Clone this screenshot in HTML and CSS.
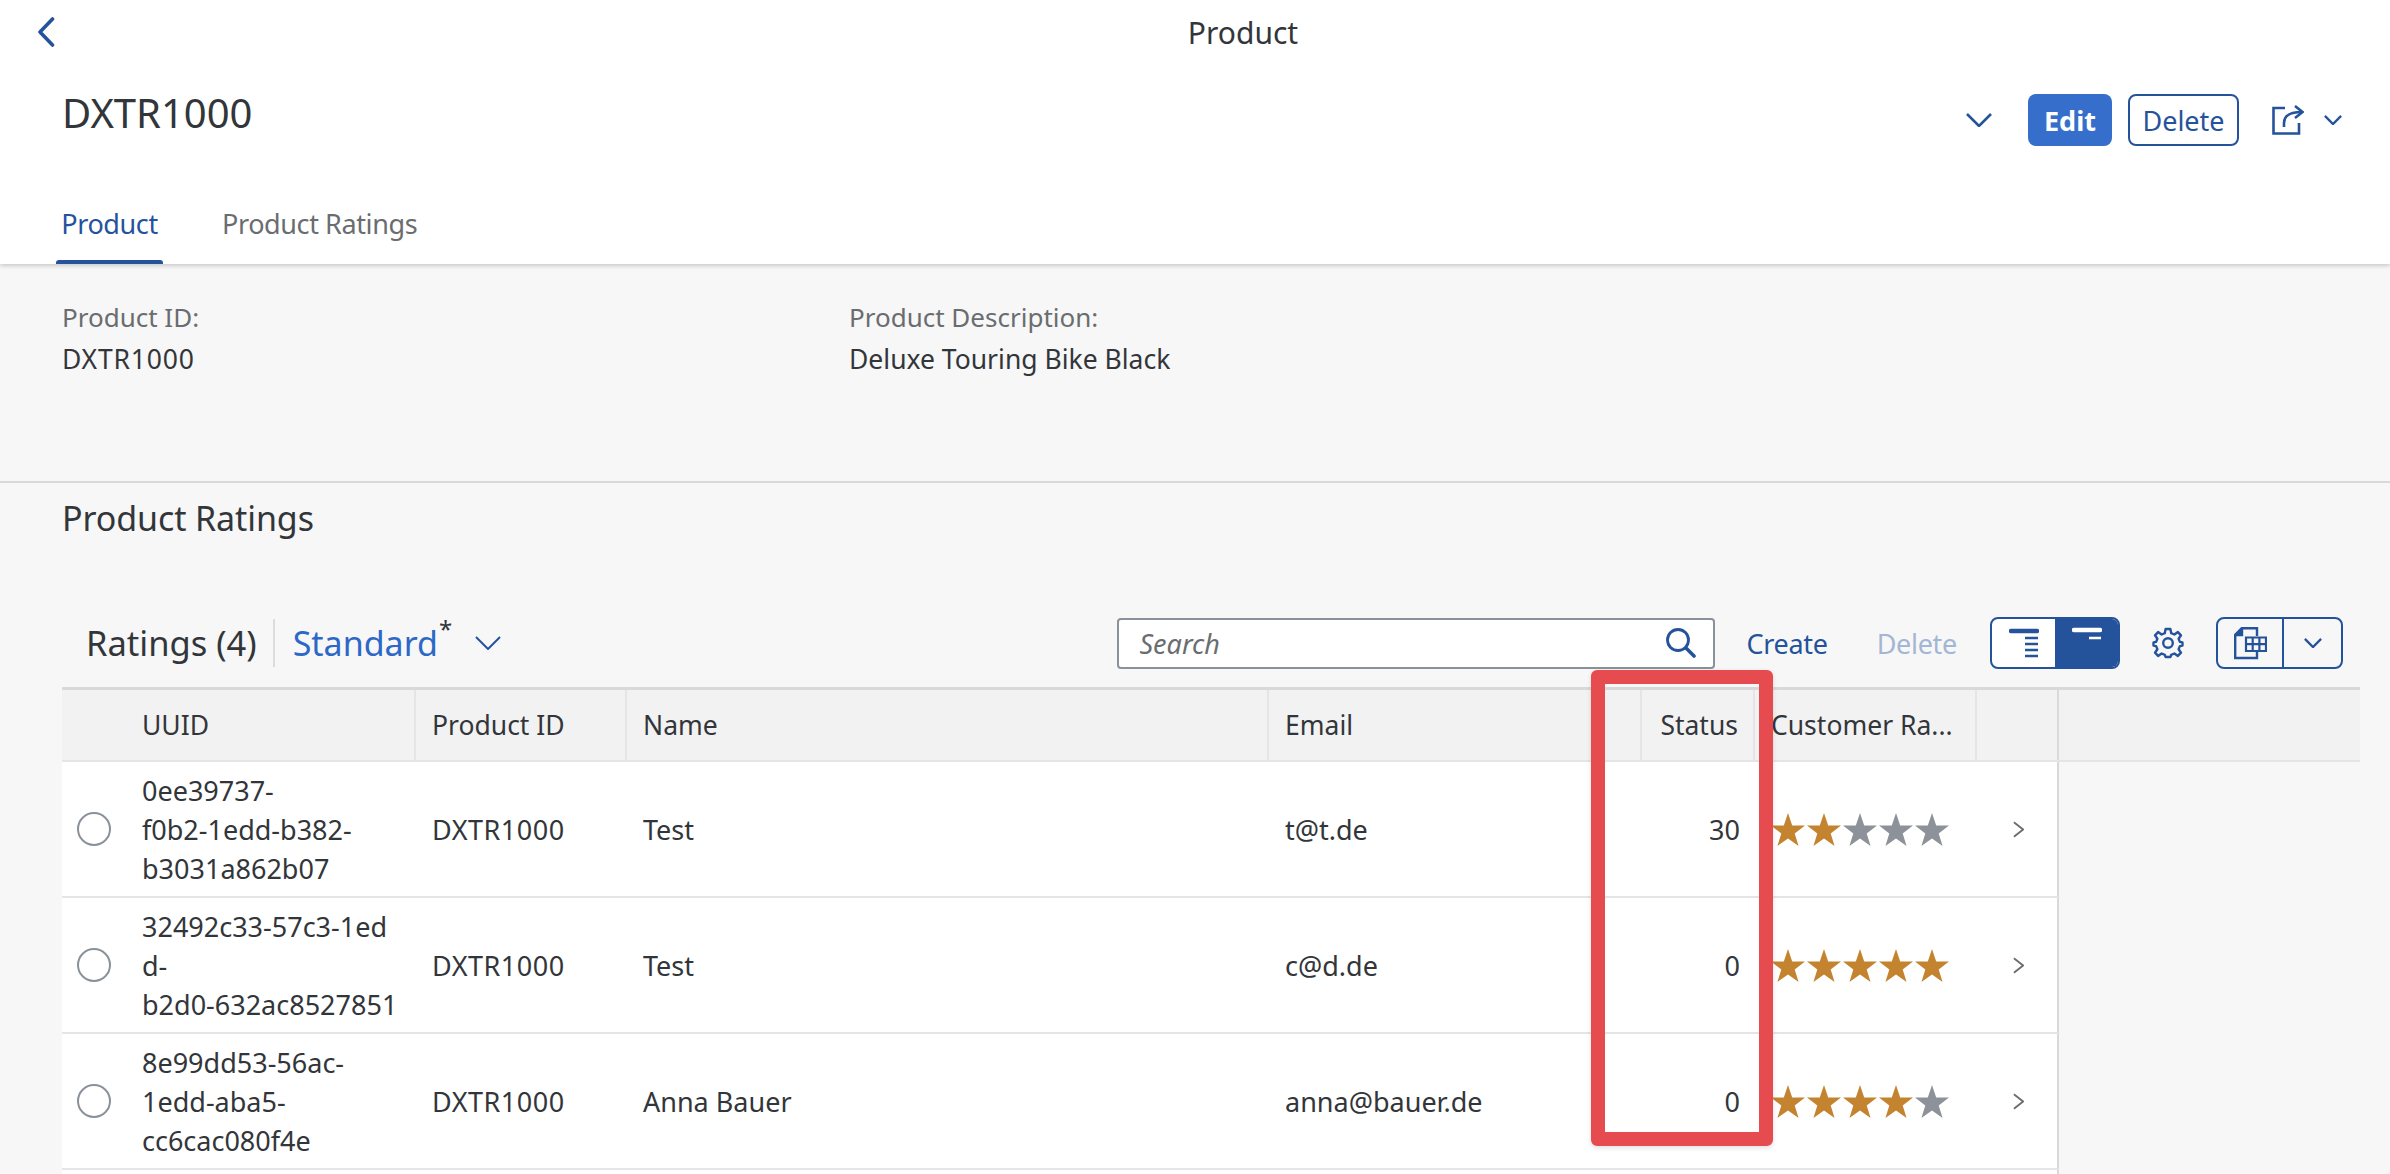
FILE: index.html
```html
<!DOCTYPE html>
<html lang="en">
<head>
    <meta charset="UTF-8">
    <title>Product</title>
    <link rel="stylesheet" href="styles.css">
</head>
<body>

<header class="page-header">
    <div class="nav-bar">
        <svg class="back-icon" viewBox="0 0 18 30"><path d="M15.5 2 L3 15 L15.5 28"/></svg>
        <span class="nav-title">Product</span>
    </div>
    <div class="title-row">
        <h1>DXTR1000</h1>
        <div class="title-actions">
            <svg class="chevron chevron-title" viewBox="0 0 26 14"><path d="M1 1 L13 13 L25 1"/></svg>
            <button class="btn btn-emph">Edit</button>
            <button class="btn btn-outline">Delete</button>
            <svg class="share-icon" viewBox="0 0 32 30"><path d="M13 3 H1.5 V28.5 H27 V18"/><path d="M12 22 V18 C12 11 17 7 30 7"/><path d="M23 1 L30.5 7 L23 13"/></svg>
            <svg class="chevron chevron-small" viewBox="0 0 20 11"><path d="M1 1 L10 10 L19 1"/></svg>
        </div>
    </div>
    <nav class="tabs">
        <a class="tab tab-active">Product</a>
        <a class="tab">Product Ratings</a>
    </nav>
</header>

<section class="facets">
    <div class="facet facet-id">
        <span class="facet-label">Product ID:</span>
        <span class="facet-value facet-code">DXTR1000</span>
    </div>
    <div class="facet">
        <span class="facet-label">Product Description:</span>
        <span class="facet-value">Deluxe Touring Bike Black</span>
    </div>
</section>

<section class="ratings">
    <h2>Product Ratings</h2>

    <div class="toolbar">
        <span class="table-title">Ratings (4)</span>
        <span class="variant">Standard<sup>*</sup></span>
        <svg class="chevron chevron-variant" viewBox="0 0 26 14"><path d="M1 1 L13 13 L25 1"/></svg>

        <div class="search">
            <span>Search</span>
            <svg viewBox="0 0 30 30"><circle cx="12" cy="12" r="10.5"/><path class="handle" d="M20 20 L28 28"/></svg>
        </div>
        <a class="text-btn create">Create</a>
        <a class="text-btn disabled">Delete</a>

        <div class="segmented">
            <span class="seg">
                <svg viewBox="0 0 30 32"><path class="thick" d="M2 4 H28"/><path d="M16 11 H29 M16 17 H29 M16 23 H29 M16 29 H29"/></svg>
            </span>
            <span class="seg seg-on">
                <svg viewBox="0 0 30 32"><path class="thick" d="M2 3 H28"/><path d="M17 11 H29"/></svg>
            </span>
        </div>

        <svg class="gear" viewBox="0 0 32 32">
            <circle cx="16" cy="16" r="4.8"/>
            <path d="M13.6 2 H18.4 L19.2 6.2 L22.4 7.5 L25.9 5.1 L29 8.3 L26.6 11.7 L27.9 14.9 L30.5 15.5 V18.5 L27.9 19.1 L26.6 22.3 L29 25.7 L25.9 28.9 L22.4 26.5 L19.2 27.8 L18.4 30 H13.6 L12.8 27.8 L9.6 26.5 L6.1 28.9 L3 25.7 L5.4 22.3 L4.1 19.1 L1.5 18.5 V15.5 L4.1 14.9 L5.4 11.7 L3 8.3 L6.1 5.1 L9.6 7.5 L12.8 6.2 Z"/>
        </svg>

        <div class="export">
            <span class="export-main">
                <svg viewBox="0 0 33 33">
                    <path d="M8 1.2 H23 V9 M23 25 V31 H1.2 V8 L8 1.2"/>
                    <path class="fold" d="M8 1.2 L1.2 8 H8 Z"/>
                    <path class="cells" d="M12 10.5 H32 V24 H12 Z M18.7 10.5 V24 M25.4 10.5 V24 M12 17.2 H32"/>
                </svg>
            </span>
            <span class="export-arrow">
                <svg class="chevron chevron-small" viewBox="0 0 20 11"><path d="M1 1 L10 10 L19 1"/></svg>
            </span>
        </div>
    </div>

    <div class="table">
        <div class="tr th-row">
            <div class="cell"></div>
            <div class="cell cell-uuid">UUID</div>
            <div class="cell">Product ID</div>
            <div class="cell">Name</div>
            <div class="cell">Email</div>
            <div class="cell cell-end">Status</div>
            <div class="cell">Customer Ra...</div>
            <div class="cell"></div>
        </div>

        <div class="tr">
            <div class="cell cell-select"><i class="radio"></i></div>
            <div class="cell cell-uuid">0ee39737-<br>f0b2-1edd-b382-<br>b3031a862b07</div>
            <div class="cell cell-code">DXTR1000</div>
            <div class="cell">Test</div>
            <div class="cell">t@t.de</div>
            <div class="cell cell-end">30</div>
            <div class="cell stars" data-rating="2"></div>
            <div class="cell cell-nav"><svg viewBox="0 0 12 18"><path d="M1 1 L11 9 L1 17"/></svg></div>
        </div>

        <div class="tr">
            <div class="cell cell-select"><i class="radio"></i></div>
            <div class="cell cell-uuid">32492c33-57c3-1ed<br>d-<br>b2d0-632ac8527851</div>
            <div class="cell cell-code">DXTR1000</div>
            <div class="cell">Test</div>
            <div class="cell">c@d.de</div>
            <div class="cell cell-end">0</div>
            <div class="cell stars" data-rating="5"></div>
            <div class="cell cell-nav"><svg viewBox="0 0 12 18"><path d="M1 1 L11 9 L1 17"/></svg></div>
        </div>

        <div class="tr">
            <div class="cell cell-select"><i class="radio"></i></div>
            <div class="cell cell-uuid">8e99dd53-56ac-<br>1edd-aba5-<br>cc6cac080f4e</div>
            <div class="cell cell-code">DXTR1000</div>
            <div class="cell">Anna Bauer</div>
            <div class="cell">anna@bauer.de</div>
            <div class="cell cell-end">0</div>
            <div class="cell stars" data-rating="4"></div>
            <div class="cell cell-nav"><svg viewBox="0 0 12 18"><path d="M1 1 L11 9 L1 17"/></svg></div>
        </div>

        <div class="tr"></div>
    </div>
</section>

<!-- annotation drawn over the Status column -->
<div class="highlight"></div>

<script>
    // fill the rating cells with five stars each
    const starPath = 'M17 0 L21.2 12.6 L34 12.6 L23.7 20.6 L27.6 33 L17 25.4 L6.4 33 L10.3 20.6 L0 12.6 L12.8 12.6 Z';
    document.querySelectorAll('.stars').forEach(function (cell) {
        const rating = Number(cell.dataset.rating);
        for (let i = 0; i < 5; i++) {
            const cls = i < rating ? 'star star-on' : 'star';
            cell.insertAdjacentHTML('beforeend',
                `<svg class="${cls}" viewBox="0 0 34 33"><path d="${starPath}"/></svg>`);
        }
    });
</script>

</body>
</html>
```

FILE: styles.css
```css
/* Layout follows the object page: header, facets, then the table section */
html, body {
    margin: 0;
    height: 1174px;
    overflow: hidden;
}
body {
    position: relative;
    font-family: "Noto Sans", sans-serif;
    font-size: 27px;
    color: #32363a;
    background-color: #f7f7f7;
}
svg {
    display: block;
    fill: none;
    stroke: #25539b;
}

/* --- Header --- */
.page-header {
    background-color: #fff;
    height: 264px;
    box-shadow: 0 2px 4px rgba(0, 0, 0, 0.18);
    position: relative;
}
.nav-bar {
    height: 64px;
    display: flex;
    align-items: center;
    justify-content: center;
    position: relative;
}
.back-icon {
    position: absolute;
    left: 37px;
    top: 17px;
    width: 18px;
    height: 30px;
    stroke-width: 3.6;
    stroke-linecap: round;
    stroke-linejoin: round;
}
.nav-title {
    font-size: 30px;
    padding-left: 96px;
}
.title-row {
    height: 100px;
    box-sizing: border-box;
    padding: 12px 48px 0 62px;
    display: flex;
    align-items: center;
    justify-content: space-between;
}
h1 {
    margin: 0 0 16px;
    font-size: 40px;
    font-weight: 400;
}
.title-actions {
    display: flex;
    align-items: center;
}
.chevron {
    stroke-width: 2.6;
    flex: none;
}
.chevron-title {
    width: 26px;
    height: 14px;
    margin-right: 36px;
}
.chevron-small {
    width: 18px;
    height: 10px;
}
.btn {
    height: 52px;
    font-family: inherit;
    font-size: 27px;
    border-radius: 8px;
    padding: 0;
    box-sizing: border-box;
}
.btn-emph {
    width: 84px;
    background-color: #356fcb;
    border: none;
    color: #fff;
    font-weight: 700;
    margin-right: 16px;
}
.btn-outline {
    width: 111px;
    background-color: #fff;
    border: 2px solid #25539b;
    color: #25539b;
    margin-right: 33px;
}
.share-icon {
    width: 32px;
    height: 30px;
    stroke-width: 2.6;
    margin-right: 20px;
}
.tabs {
    display: flex;
    padding-left: 56px;
    margin-top: 36px;
    gap: 59px;
}
.tab {
    position: relative;
    height: 64px;
    font-size: 27px;
    letter-spacing: -0.4px;
    color: #6a6d70;
    line-height: 48px;
    white-space: nowrap;
}
.tab-active {
    width: 107px;
    color: #25539b;
    text-align: center;
}
.tab-active::after {
    content: "";
    position: absolute;
    left: 0;
    right: 0;
    bottom: 0;
    height: 4px;
    background-color: #25539b;
    border-radius: 3px 3px 0 0;
}

/* --- Facets --- */
.facets {
    height: 219px;
    box-sizing: border-box;
    padding: 35px 62px 0;
    border-bottom: 2px solid #d9d9d9;
    display: flex;
    font-size: 26.5px;
}
.facet {
    display: flex;
    flex-direction: column;
    gap: 6px;
}
.facet-id {
    width: 787px;
}
.facet-label {
    color: #6a6d70;
    font-size: 26px;
}
.facet-code {
    letter-spacing: 0.8px;
}

/* --- Ratings section --- */
.ratings {
    padding-left: 62px;
}
h2 {
    margin: 0;
    box-sizing: border-box;
    padding-top: 13px;
    font-size: 34px;
    letter-spacing: -0.1px;
    font-weight: 400;
    height: 60px;
    line-height: 44px;
}
.toolbar {
    display: flex;
    align-items: center;
    width: 2281px;
    height: 52px;
    margin-top: 74px;
    padding-left: 24px;
    box-sizing: border-box;
}
.table-title {
    font-size: 34.5px;
    padding-right: 16px;
    border-right: 2px solid #dcdcdc;
    line-height: 48px;
}
.variant {
    font-size: 34px;
    color: #2b68c8;
    padding-left: 18px;
}
.variant sup {
    color: #32363a;
    font-size: 24px;
    line-height: 0;
    margin-left: 1px;
    vertical-align: 18px;
}
.chevron-variant {
    width: 26px;
    height: 14px;
    margin-left: 23px;
    stroke-width: 2;
}
.search {
    width: 598px;
    height: 51px;
    box-sizing: border-box;
    margin-left: auto;
    border: 2px solid #89919a;
    border-radius: 4px;
    background-color: #fff;
    padding: 0 17px 0 20px;
    display: flex;
    align-items: center;
    justify-content: space-between;
    font-style: italic;
    color: #6a6d70;
}
.search svg {
    width: 30px;
    height: 30px;
    stroke-width: 2.8;
}
.search .handle {
    stroke-width: 3.6;
    stroke-linecap: round;
}
.text-btn {
    margin-left: 31px;
    font-size: 27px;
    letter-spacing: -0.3px;
    color: #25539b;
}
.text-btn.disabled {
    color: #a3b6d3;
    margin-left: 49px;
}
.segmented {
    margin-left: 33px;
    width: 130px;
    height: 52px;
    box-sizing: border-box;
    border: 2px solid #25539b;
    border-radius: 8px;
    display: flex;
    overflow: hidden;
    background-color: #fff;
}
.seg {
    flex: 1;
    display: flex;
    align-items: center;
    justify-content: center;
}
.seg svg {
    width: 30px;
    height: 32px;
    stroke-width: 2.6;
}
.seg .thick {
    stroke-width: 4.6;
    stroke-linecap: round;
}
.seg-on {
    background-color: #25539b;
}
.seg-on svg {
    stroke: #fff;
}
.gear {
    width: 32px;
    height: 32px;
    margin-left: 32px;
    stroke-width: 2.4;
    stroke-linejoin: round;
}
.export {
    margin-left: 32px;
    width: 127px;
    height: 52px;
    box-sizing: border-box;
    border: 2px solid #25539b;
    border-radius: 8px;
    display: flex;
}
.export-main {
    width: 64px;
    border-right: 2px solid #25539b;
    display: flex;
    align-items: center;
    justify-content: center;
}
.export-main svg {
    width: 33px;
    height: 33px;
    stroke-width: 2.4;
}
.export-main .fold {
    fill: #25539b;
}
.export-main .cells {
    stroke-width: 2.2;
    fill: #f7f7f7;
}
.export-arrow {
    flex: 1;
    display: flex;
    align-items: center;
    justify-content: center;
}

/* --- Table --- */
.table {
    margin-top: 18px;
}
.tr {
    display: grid;
    grid-template-columns: 70px 284px 211px 642px 373px 113px 222px 82px;
    width: 1997px;
    height: 136px;
    box-sizing: border-box;
    background-color: #fff;
    border-bottom: 2px solid #e5e5e5;
    border-right: 2px solid #d9d9d9;
}
/* header band runs on past the last column */
.th-row {
    width: 2298px;
    height: 75px;
    background-color: #f2f2f2;
    border-top: 3px solid #d9d9d9;
    border-right: none;
    grid-template-columns: 70px 284px 211px 642px 373px 113px 222px 82px 1fr;
}
.cell {
    display: flex;
    align-items: center;
    padding-left: 16px;
    box-sizing: border-box;
    white-space: nowrap;
    line-height: 39px;
}
.th-row .cell {
    border-right: 2px solid #e5e5e5;
    font-size: 26.5px;
}
.th-row .cell:first-child {
    border-right: none;
}
.th-row .cell:nth-child(8) {
    border-right-color: #d9d9d9;
}
.tr .cell-uuid {
    padding-left: 10px;
}
.tr .cell-end {
    justify-content: flex-end;
    padding-right: 15px;
}
.cell-code {
    letter-spacing: 0.5px;
}
.cell-select {
    padding-left: 15px;
}
.radio {
    display: block;
    width: 34px;
    height: 34px;
    box-sizing: border-box;
    border: 2px solid #89919a;
    border-radius: 50%;
    background-color: #fff;
}
.stars {
    gap: 2px;
    padding-left: 16px;
}
.star {
    width: 34px;
    height: 33px;
    flex: none;
    stroke: none;
    fill: #8d9199;
}
.star-on {
    fill: #c4842f;
}
.cell-nav {
    padding-left: 36px;
}
.cell-nav svg {
    width: 11px;
    height: 17px;
    stroke: #6a6d70;
    stroke-width: 2;
}

/* --- Annotation --- */
.highlight {
    position: absolute;
    left: 1591px;
    top: 670px;
    width: 182px;
    height: 476px;
    box-sizing: border-box;
    border: 14px solid #e64b50;
    border-radius: 6px;
    box-shadow: 0 2px 5px rgba(0, 0, 0, 0.12);
}
```
